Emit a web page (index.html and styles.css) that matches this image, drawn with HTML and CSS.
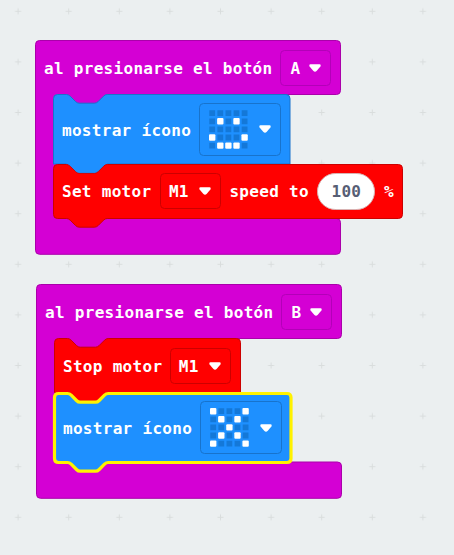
FILE: index.html
```html
<!DOCTYPE html>
<html lang="es">
<head>
<meta charset="utf-8">
<title>Bloques</title>
<link rel="stylesheet" href="styles.css">
</head>
<body>
<main class="workspace">
  <svg class="grid" width="454" height="555" aria-hidden="true">
    <defs>
      <pattern id="cross" x="-7.2" y="-14" width="50.6" height="50.6" patternUnits="userSpaceOnUse">
        <path d="M22.3 25.3h6M25.3 22.3v6" stroke="#d9dddd" stroke-width="1"/>
      </pattern>
      <path id="arrow" d="M1.500 .3H10.500Q12.300 .5 11.400 2.400L7.800 6.800Q6 8.600 4.200 6.800L.6 2.400Q-.3 .5 1.500 .3Z"/>
    </defs>
    <rect width="454" height="555" fill="url(#cross)"/>
  </svg>

  <section class="event event-a">
    <svg class="shape" width="310" height="220"><path class="purple" d="M4.500 .5H301.500Q305.500 .5 305.500 4.500V50.500Q305.500 54.500 301.500 54.500H74V66H24V178.500H301.500Q305.500 178.500 305.500 182.500V210.300Q305.500 214.300 301.500 214.300H4.500Q.5 214.300 .5 210.300V4.500Q.5 .5 4.500 .5Z"/></svg>
    <div class="row head"><span class="label">al presionarse el botón</span><span class="field purple-field letter"><span>A</span><svg class="arrow"><use href="#arrow"/></svg></span></div>
    <div class="body">
      <div class="block icon-block">
        <svg class="shape" width="240" height="82"><path class="blue" d="M4.500 .5H13.500Q15.500 .5 17.200 2.200L22.500 7.500Q24.200 9.200 26.200 9.200H41.500Q43.500 9.200 45.200 7.500L50.500 2.200Q52.200 .5 54.200 .5H233Q237 .5 237 4.500V70H54.200L50 80H18L13.500 70H.5V4.500Q.5 .5 4.500 .5Z"/></svg>
        <div class="row"><span class="label lower">mostrar ícono</span><span class="field blue-field">
          <svg class="leds" viewBox="0 0 40 40"><g class="off"><path d="M.3 3.200H39M.3 11.300H39M.3 19.400H39M.3 27.500H39M.3 35.600H39"/></g><g class="on"><rect x="8.100" y="8.100" width="6.400" height="6.400" rx="1"/><rect x="24.300" y="8.100" width="6.400" height="6.400" rx="1"/><rect x="0" y="24.300" width="6.400" height="6.400" rx="1"/><rect x="32.400" y="24.300" width="6.400" height="6.400" rx="1"/><rect x="8.100" y="32.400" width="6.400" height="6.400" rx="1"/><rect x="16.200" y="32.400" width="6.400" height="6.400" rx="1"/><rect x="24.300" y="32.400" width="6.400" height="6.400" rx="1"/></g></svg>
          <svg class="arrow"><use href="#arrow"/></svg></span></div>
      </div>
      <div class="block motor-block">
        <svg class="shape" width="352" height="66"><path class="red" d="M4.500 .5H13.500Q15.500 .5 17.200 2.200L22.500 7.500Q24.200 9.200 26.200 9.200H41.500Q43.500 9.200 45.200 7.500L50.500 2.200Q52.200 .5 54.200 .5H345.500Q349.500 .5 349.500 4.500V50.500Q349.500 54.500 345.500 54.500H54.200Q52.200 54.500 50.500 56.200L45.200 61.500Q43.500 63.200 41.500 63.200H26.200Q24.200 63.200 22.500 61.500L17.200 56.200Q15.500 54.500 13.500 54.500H4.500Q.5 54.500 .5 50.500V4.500Q.5 .5 4.500 .5Z"/><path class="blue-fill" d="M14 -1Q15.500 0 17 1.500L22.500 7Q24.200 8.700 26.200 8.700H41.500Q43.500 8.700 45.200 7L50.500 1.500Q52 0 53.500 -1Z"/></svg>
        <div class="row"><span class="label">Set motor</span><span class="field red-field"><span>M1</span><svg class="arrow"><use href="#arrow"/></svg></span><span class="label">speed to</span><span class="number">100</span><span class="label">%</span></div>
      </div>
    </div>
  </section>

  <section class="event event-b">
    <svg class="shape" width="310" height="220"><path class="purple" d="M4.500 .5H301.500Q305.500 .5 305.500 4.500V50.500Q305.500 54.500 301.500 54.500H74V66H24V178H301.500Q305.500 178 305.500 182V210.300Q305.500 214.300 301.500 214.300H4.500Q.5 214.300 .5 210.300V4.500Q.5 .5 4.500 .5Z"/></svg>
    <div class="row head"><span class="label">al presionarse el botón</span><span class="field purple-field letter"><span>B</span><svg class="arrow"><use href="#arrow"/></svg></span></div>
    <div class="body">
      <div class="block motor-block">
        <svg class="shape" width="190" height="66"><path class="red" d="M4.500 .5H13.500Q15.500 .5 17.200 2.200L22.500 7.500Q24.200 9.200 26.200 9.200H41.500Q43.500 9.200 45.200 7.500L50.500 2.200Q52.200 .5 54.200 .5H182.500Q186.500 .5 186.500 4.500V54.500H54.200Q52.200 54.500 50.500 56.200L45.200 61.500Q43.500 63.200 41.500 63.200H26.200Q24.200 63.200 22.500 61.500L17.200 56.200Q15.500 54.500 13.500 54.500H.5V4.500Q.5 .5 4.500 .5Z"/></svg>
        <div class="row stop-row"><span class="label">Stop motor</span><span class="field red-field"><span>M1</span><svg class="arrow"><use href="#arrow"/></svg></span></div>
      </div>
      <div class="block icon-block">
        <svg class="shape" width="240" height="82"><path class="blue selected" d="M4.500 .5H13.500Q15.500 .5 17.200 2.200L22.500 7.500Q24.200 9.200 26.200 9.200H41.500Q43.500 9.200 45.200 7.500L50.500 2.200Q52.200 .5 54.200 .5H233Q237 .5 237 4.500V65.500Q237 69.500 233 69.500H54.200Q52.200 69.500 50.500 71.200L45.200 76.500Q43.500 78.200 41.500 78.200H26.200Q24.200 78.200 22.500 76.500L17.200 71.200Q15.500 69.500 13.500 69.500H4.500Q.5 69.500 .5 65.500V4.500Q.5 .5 4.500 .5Z"/></svg>
        <div class="row"><span class="label">mostrar ícono</span><span class="field blue-field">
          <svg class="leds" viewBox="0 0 40 40"><g class="off"><path d="M.3 3.200H39M.3 11.300H39M.3 19.400H39M.3 27.500H39M.3 35.600H39"/></g><g class="on"><rect x="0" y="0" width="6.400" height="6.400" rx="1"/><rect x="32.400" y="0" width="6.400" height="6.400" rx="1"/><rect x="8.100" y="8.100" width="6.400" height="6.400" rx="1"/><rect x="24.300" y="8.100" width="6.400" height="6.400" rx="1"/><rect x="16.200" y="16.200" width="6.400" height="6.400" rx="1"/><rect x="8.100" y="24.300" width="6.400" height="6.400" rx="1"/><rect x="24.300" y="24.300" width="6.400" height="6.400" rx="1"/><rect x="0" y="32.400" width="6.400" height="6.400" rx="1"/><rect x="32.400" y="32.400" width="6.400" height="6.400" rx="1"/></g></svg>
          <svg class="arrow"><use href="#arrow"/></svg></span></div>
      </div>
    </div>
  </section>
</main>
</body>
</html>
```
FILE: styles.css
```css
* { box-sizing: border-box; }
body { margin: 0; }
.workspace {
  position: relative;
  width: 454px;
  height: 555px;
  overflow: hidden;
  background: #ebeff0;
  color: #fff;
  font: bold 16px/18px "DejaVu Sans Mono", monospace;
  letter-spacing: 0.3px;
}
.grid { display: block; }
.event { position: absolute; width: 370px; height: 216px; }
.event-a { left: 35px; top: 40px; }
.event-b { left: 36px; top: 284px; }
.shape { position: absolute; left: 0; top: 0; overflow: visible; }
.purple { fill: #d400d4; stroke: #aa00aa; }
.blue { fill: #1e90ff; stroke: #1873cc; }
.blue-fill { fill: #1e90ff; }
.red { fill: #ff0000; stroke: #cc0000; }
.selected { stroke: #fff200; stroke-width: 3.2; }
.row {
  position: relative;
  display: flex;
  align-items: center;
  gap: 8.5px;
  height: 100%;
  padding-left: 9px;
  white-space: pre;
}
.head { height: 55px; gap: 8px; }
.icon-block .row { gap: 7.700px; }
.stop-row { top: 1px; gap: 7.500px; }
.body { padding: 0 0 0 18px; margin-top: -1px; }
.block { position: relative; }
.icon-block { height: 70px; }
.motor-block { height: 54.500px; }
.label, .field > span { position: relative; top: 1px; }
.label.lower { top: 2px; }
.field {
  display: flex;
  flex: none;
  align-items: center;
  justify-content: space-between;
  height: 36px;
  padding: 0 9px 0 9px;
  border: 1px solid;
  border-radius: 4.500px;
}
.letter { width: 51px; }
.purple-field { border-color: #b300b8; }
.red-field { width: 61px; border-color: #cc0000; padding-left: 8px; }
.blue-field { width: 82px; height: 53px; padding-left: 9.500px; border-color: #1873cc; }
.arrow { width: 12px; height: 8px; flex: none; fill: #fff; }
.leds { width: 40px; height: 40px; flex: none; margin-top: 1px; }
.off path { stroke: #1478d8; stroke-width: 5.800; stroke-dasharray: 5.800 2.300; }
.on { fill: #fff; }
.number {
  width: 58px;
  height: 37px;
  flex: none;
  border: 1px solid #d9b3b3;
  border-radius: 19px;
  background: #fff;
  color: #575e75;
  line-height: 36px;
  text-align: center;
}
```
